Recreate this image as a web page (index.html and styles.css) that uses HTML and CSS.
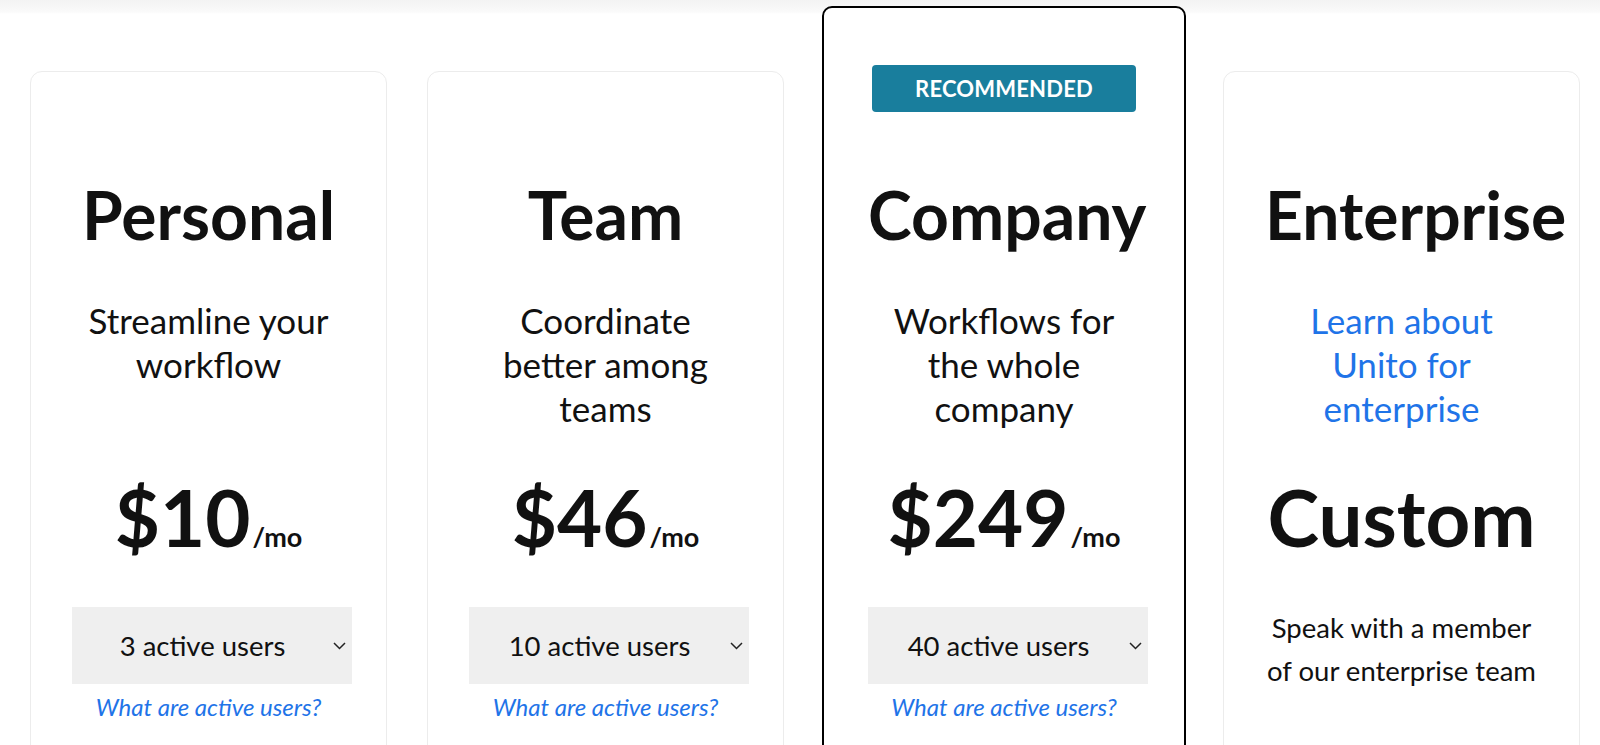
FILE: index.html
```html
<!DOCTYPE html>
<html lang="en">
<head>
<meta charset="utf-8">
<title>Pricing</title>
<link rel="stylesheet" href="styles.css">
</head>
<body>
<main class="pricing">
  <section class="card">
    <h2 class="plan-name">Personal</h2>
    <p class="plan-desc">Streamline your workflow</p>
    <div class="price"><span class="amount">$10</span><span class="period">/mo</span></div>
    <div class="select"><span class="select-label">3 active users</span><svg class="chev" width="13" height="8" viewBox="0 0 13 8"><polyline points="1,1 6.5,6.5 12,1" fill="none" stroke="#222" stroke-width="1.5"/></svg></div>
    <a class="help" href="#">What are active users?</a>
  </section>
  <section class="card">
    <h2 class="plan-name">Team</h2>
    <p class="plan-desc">Coordinate better among teams</p>
    <div class="price"><span class="amount">$46</span><span class="period">/mo</span></div>
    <div class="select"><span class="select-label">10 active users</span><svg class="chev" width="13" height="8" viewBox="0 0 13 8"><polyline points="1,1 6.5,6.5 12,1" fill="none" stroke="#222" stroke-width="1.5"/></svg></div>
    <a class="help" href="#">What are active users?</a>
  </section>
  <section class="card card--featured">
    <div class="badge">RECOMMENDED</div>
    <h2 class="plan-name">Company</h2>
    <p class="plan-desc">Workflows for the whole company</p>
    <div class="price"><span class="amount">$249</span><span class="period">/mo</span></div>
    <div class="select"><span class="select-label">40 active users</span><svg class="chev" width="13" height="8" viewBox="0 0 13 8"><polyline points="1,1 6.5,6.5 12,1" fill="none" stroke="#222" stroke-width="1.5"/></svg></div>
    <a class="help" href="#">What are active users?</a>
  </section>
  <section class="card">
    <h2 class="plan-name">Enterprise</h2>
    <p class="plan-desc plan-desc--link"><a href="#">Learn about Unito for enterprise</a></p>
    <div class="price"><span class="amount">Custom</span></div>
    <p class="speak">Speak with a member of our enterprise team</p>
  </section>
</main>
</body>
</html>
```
FILE: styles.css
```css
html, body {
  margin: 0;
  padding: 0;
  height: 745px;
  overflow: hidden;
}
body {
  font-family: Lato, "Liberation Sans", sans-serif;
  color: #111;
  background: linear-gradient(#f3f3f3 0, #fafafa 12px, #fff 14px);
}
.pricing {
  display: flex;
  align-items: flex-start;
  gap: 40px;
  padding: 6px 0 0 30px;
}
.card {
  box-sizing: border-box;
  width: 357px;
  min-height: 800px;
  margin-top: 65px;
  padding: 0 41px;
  background: #fff;
  border: 1px solid #ececec;
  border-radius: 12px;
  display: flex;
  flex-direction: column;
  align-items: stretch;
  text-align: center;
  flex-shrink: 0;
}
.card--featured {
  width: 364px;
  margin: 0 -3px 0 -2px;
  padding: 0 44px;
  border: 2px solid #000;
  border-radius: 10px;
}
.badge {
  margin: 57px 4px 0;
  height: 47px;
  line-height: 47px;
  background: #197e9d;
  color: #fff;
  font-weight: 700;
  font-size: 22px;
  letter-spacing: 0.2px;
  border-radius: 4px;
}
.plan-name {
  margin: 103px 0 0;
  font-size: 66px;
  line-height: 80px;
  font-weight: 700;
  white-space: nowrap;
}
.card--featured .plan-name {
  margin-top: 63px;
}
.plan-desc {
  align-self: center;
  max-width: 262px;
  margin: 43px 0 0;
  min-height: 132px;
  font-size: 35px;
  line-height: 44px;
  font-weight: 400;
}
.plan-desc--link a {
  color: #1f74e8;
  text-decoration: none;
}
.price {
  margin-top: 42px;
  height: 90px;
  line-height: 90px;
  white-space: nowrap;
}
.amount {
  font-size: 78px;
  font-weight: 700;
}
.period {
  font-size: 27px;
  font-weight: 700;
  margin-left: 2px;
}
.select {
  box-sizing: border-box;
  width: 280px;
  height: 77px;
  margin-top: 45px;
  padding-right: 6px;
  background: #efefef;
  display: flex;
  align-items: center;
  flex-shrink: 0;
}
.select-label {
  flex: 1;
  text-align: center;
  font-size: 27.5px;
}
.chev {
  display: block;
}
.help {
  margin-top: 8px;
  font-size: 24px;
  line-height: 30px;
  font-style: italic;
  color: #1f74e8;
  text-decoration: none;
}
.speak {
  align-self: center;
  width: 290px;
  margin: 44px 0 0;
  font-size: 27.5px;
  line-height: 43px;
}
```
